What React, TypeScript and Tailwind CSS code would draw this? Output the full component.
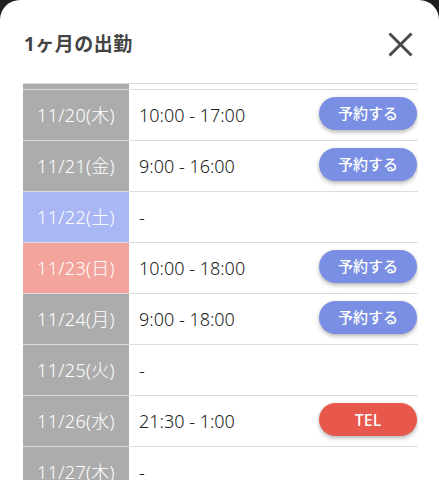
import React from 'react';

type Row = {
    date: string;
    time: string;
    kind: 'weekday' | 'sat' | 'sun';
    action?: 'reserve' | 'tel';
};

const rows: Row[] = [
    { date: '', time: '', kind: 'weekday' }, // previous day, scrolled out of view
    { date: '11/20(木)', time: '10:00 - 17:00', kind: 'weekday', action: 'reserve' },
    { date: '11/21(金)', time: '9:00 - 16:00', kind: 'weekday', action: 'reserve' },
    { date: '11/22(土)', time: '-', kind: 'sat' },
    { date: '11/23(日)', time: '10:00 - 18:00', kind: 'sun', action: 'reserve' },
    { date: '11/24(月)', time: '9:00 - 18:00', kind: 'weekday', action: 'reserve' },
    { date: '11/25(火)', time: '-', kind: 'weekday' },
    { date: '11/26(水)', time: '21:30 - 1:00', kind: 'weekday', action: 'tel' },
    { date: '11/27(木)', time: '-', kind: 'weekday' },
];

const dateBg = {
    weekday: 'bg-[#acacac]',
    sat: 'bg-[#a9b8f4]',
    sun: 'bg-[#f3a49d]',
};

const App = () => {
    return (
        <div
            className="w-[439px] h-[480px] bg-[#1f1f1f] overflow-hidden"
            style={{ fontFamily: '"Noto Sans", "Noto Sans CJK JP", sans-serif' }}
        >
            <div className="flex flex-col h-full bg-white rounded-t-[20px]">
                {/* Header */}
                <div className="flex items-center justify-between pt-[32px] pb-[26px] pl-[24px] pr-[26px]">
                    <h1 className="text-[19px] font-bold text-[#444] leading-none tracking-[0.5px]">1ヶ月の出勤</h1>
                    <svg width="25" height="25" viewBox="0 0 25 25" className="text-[#4a4a4a]">
                        <path d="M1.5 1.5 L23.5 23.5 M23.5 1.5 L1.5 23.5" stroke="currentColor" strokeWidth="3" fill="none" />
                    </svg>
                </div>

                {/* Schedule list */}
                <div className="flex-1 ml-[23px] w-[395px] overflow-hidden border-t border-[#dcdcdc]">
                    <div className="-mt-[45px]">
                        {rows.map((row, index) => (
                            <div key={index} className="flex h-[51px] border-b border-[#dcdcdc]">
                                <div
                                    className={`w-[106px] shrink-0 flex items-center justify-center text-white text-[18px] font-light tracking-[0.3px] ${dateBg[row.kind]}`}
                                >
                                    {row.date}
                                </div>
                                <div className="flex flex-1 items-center justify-between pl-[10px] pr-[1px]">
                                    <span className="text-[18px] font-light text-[#222]">{row.time}</span>
                                    {row.action === 'reserve' && (
                                        <button
                                            type="button"
                                            className="w-[98px] h-[33px] -mt-[3px] rounded-full bg-[#7a8fe3] text-white text-[15px] font-medium shadow-[0_2px_4px_rgba(0,0,0,0.3)]"
                                        >
                                            予約する
                                        </button>
                                    )}
                                    {row.action === 'tel' && (
                                        <button
                                            type="button"
                                            className="w-[98px] h-[33px] -mt-[3px] rounded-full bg-[#e8574b] text-white text-[16px] font-medium shadow-[0_2px_4px_rgba(0,0,0,0.3)]"
                                        >
                                            TEL
                                        </button>
                                    )}
                                </div>
                            </div>
                        ))}
                    </div>
                </div>
            </div>
        </div>
    );
};

export default App;
